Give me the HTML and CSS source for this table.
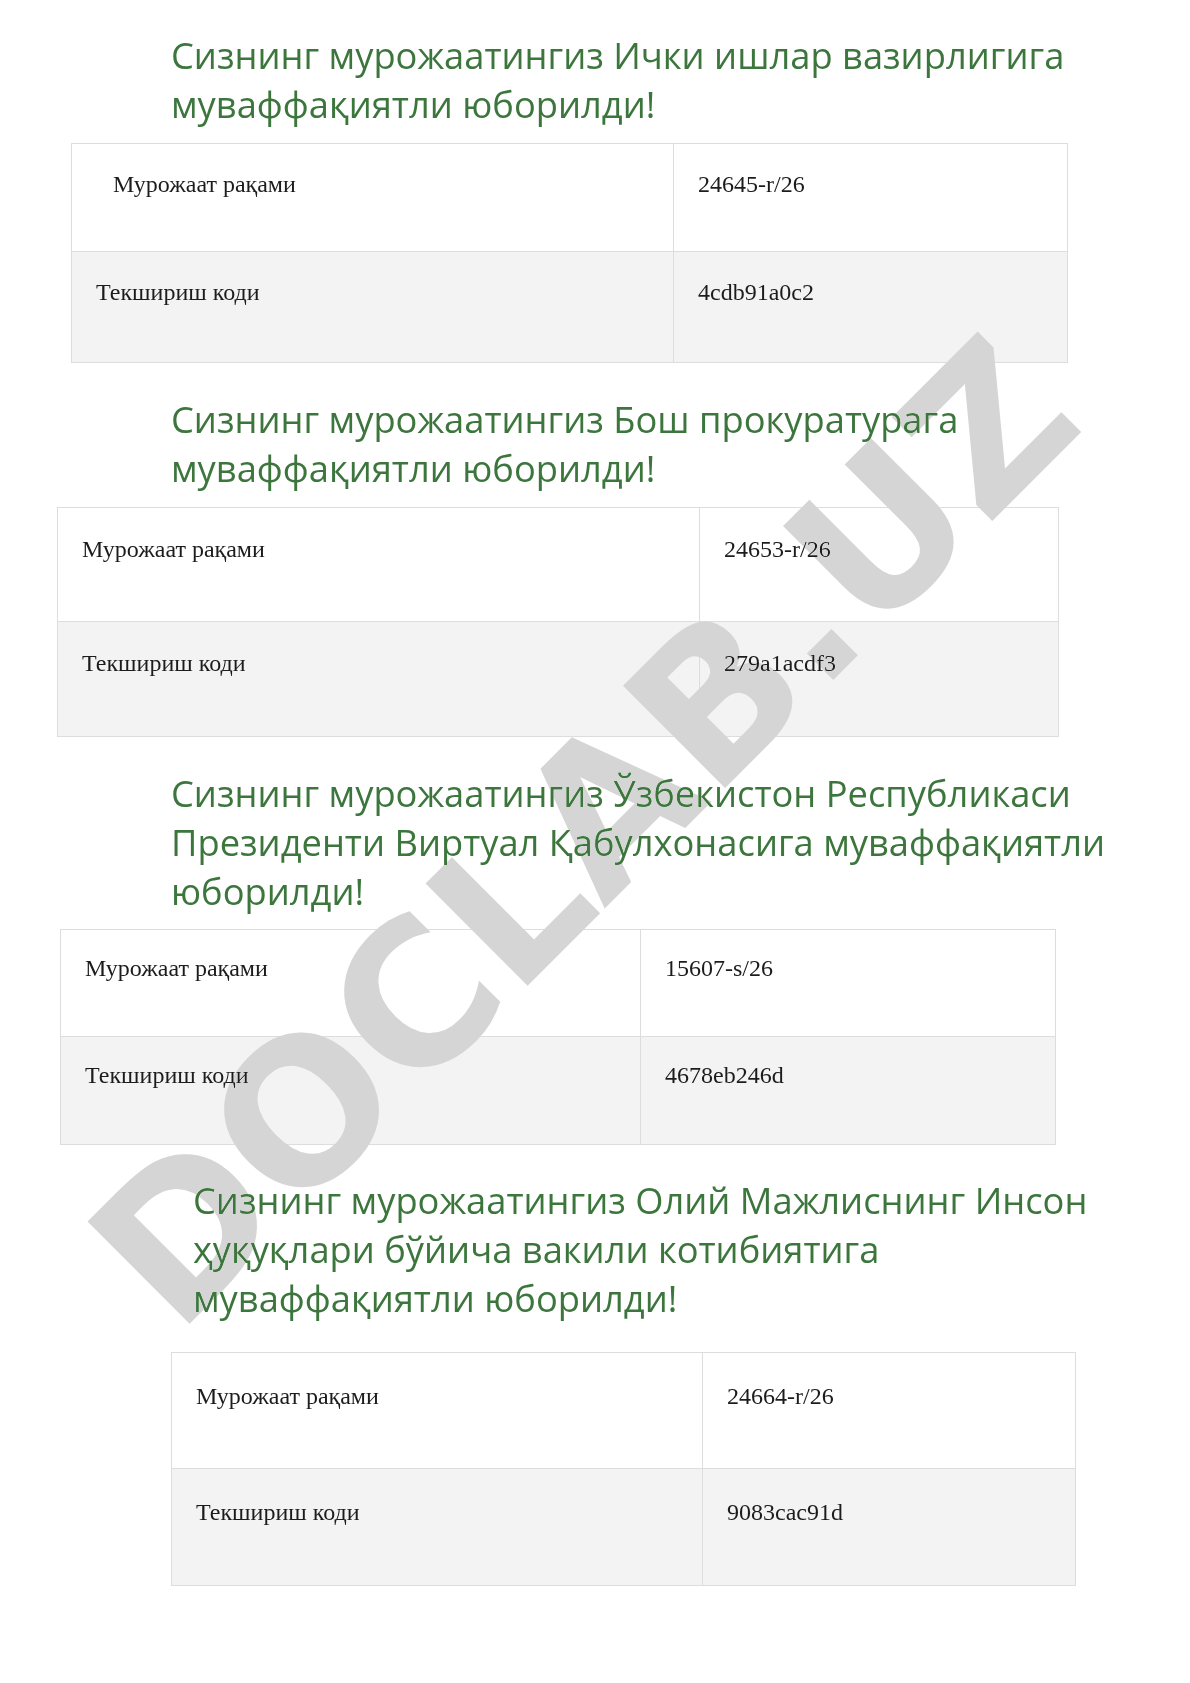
FILE: index.html
```html
<!DOCTYPE html>
<html lang="uz">
<head>
<meta charset="utf-8">
<title>Мурожаат</title>
<link rel="stylesheet" href="styles.css">
</head>
<body>
<div class="page">
  <section class="block block-1">
    <h2 class="title">Сизнинг мурожаатингиз Ички ишлар вазирлигига<br>муваффақиятли юборилди!</h2>
    <table class="info">
      <tr class="row-num"><td class="label label-indent">Мурожаат рақами</td><td class="value">24645-r/26</td></tr>
      <tr class="row-code"><td class="label">Текшириш коди</td><td class="value">4cdb91a0c2</td></tr>
    </table>
  </section>

  <section class="block block-2">
    <h2 class="title">Сизнинг мурожаатингиз Бош прокуратурага<br>муваффақиятли юборилди!</h2>
    <table class="info">
      <tr class="row-num"><td class="label">Мурожаат рақами</td><td class="value">24653-r/26</td></tr>
      <tr class="row-code"><td class="label">Текшириш коди</td><td class="value">279a1acdf3</td></tr>
    </table>
  </section>

  <section class="block block-3">
    <h2 class="title">Сизнинг мурожаатингиз Ўзбекистон Республикаси<br>Президенти Виртуал Қабулхонасига муваффақиятли<br>юборилди!</h2>
    <table class="info">
      <tr class="row-num"><td class="label">Мурожаат рақами</td><td class="value">15607-s/26</td></tr>
      <tr class="row-code"><td class="label">Текшириш коди</td><td class="value">4678eb246d</td></tr>
    </table>
  </section>

  <section class="block block-4">
    <h2 class="title">Сизнинг мурожаатингиз Олий Мажлиснинг Инсон<br>ҳуқуқлари бўйича вакили котибиятига<br>муваффақиятли юборилди!</h2>
    <table class="info">
      <tr class="row-num"><td class="label">Мурожаат рақами</td><td class="value">24664-r/26</td></tr>
      <tr class="row-code"><td class="label">Текшириш коди</td><td class="value">9083cac91d</td></tr>
    </table>
  </section>

  <div class="watermark">DOCLAB.UZ</div>
</div>
</body>
</html>
```

FILE: styles.css
```css
html, body {
  margin: 0;
  padding: 0;
  background: #ffffff;
}

.page {
  position: relative;
  width: 1190px;
  height: 1683px;
  overflow: hidden;
  background: #ffffff;
  isolation: isolate;
}

.block {
  display: flex;
  flex-direction: column;
  align-items: flex-start;
}

.title {
  margin: 0;
  font-family: "Open Sans", "Noto Sans", sans-serif;
  font-weight: 400;
  font-size: 36.3px;
  line-height: 49px;
  color: #3c763d;
  white-space: nowrap;
}

.info {
  border-collapse: collapse;
  font-family: "Liberation Serif", "Times New Roman", serif;
  font-size: 24px;
  line-height: 34px;
  color: #1c1c1c;
}

.info td {
  border: 1px solid #dddddd;
  padding: 23px 24px;
  vertical-align: top;
  box-sizing: border-box;
}

.row-num td {
  background: #ffffff;
}

.row-code td {
  background: #f3f3f3;
}

.label-indent {
  padding-left: 41px !important;
}

/* block 1 */
.block-1 {
  padding-top: 31px;
}
.block-1 .title {
  margin-left: 171px;
}
.block-1 .info {
  margin-top: 14px;
  margin-left: 71px;
  width: 997px;
}
.block-1 .label { width: 602px; }
.block-1 .row-num { height: 108px; }
.block-1 .row-code { height: 111px; }

/* block 2 */
.block-2 {
  padding-top: 32px;
}
.block-2 .title {
  margin-left: 171px;
}
.block-2 .info {
  margin-top: 14px;
  margin-left: 57px;
  width: 1002px;
}
.block-2 .label { width: 642px; }
.block-2 .row-num { height: 114px; }
.block-2 .row-code { height: 115px; }
.block-2 td { padding-top: 24px; }

/* block 3 */
.block-3 {
  padding-top: 32px;
}
.block-3 .title {
  margin-left: 171px;
}
.block-3 .info {
  margin-top: 13px;
  margin-left: 60px;
  width: 996px;
}
.block-3 .label { width: 580px; }
.block-3 .row-num { height: 107px; }
.block-3 .row-code { height: 108px; }
.block-3 td { padding-top: 21px; }

/* block 4 */
.block-4 {
  padding-top: 31px;
}
.block-4 .title {
  margin-left: 193px;
}
.block-4 .info {
  margin-top: 29px;
  margin-left: 171px;
  width: 905px;
}
.block-4 .label { width: 531px; }
.block-4 .row-num { height: 116px; }
.block-4 .row-code { height: 117px; }
.block-4 td { padding-top: 26px; }

.watermark {
  position: absolute;
  left: 584px;
  top: 833px;
  transform: translate(-50%, -50%) rotate(-45deg);
  font-family: "DejaVu Sans", "Liberation Sans", sans-serif;
  font-weight: 700;
  font-size: 198px;
  line-height: 1;
  color: #d5d5d5;
  mix-blend-mode: darken;
  white-space: nowrap;
  pointer-events: none;
}
```
